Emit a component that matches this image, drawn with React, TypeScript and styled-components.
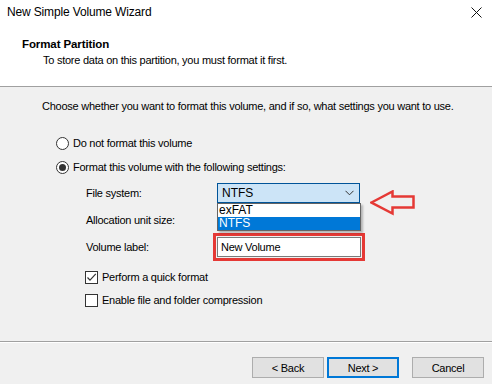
import React from "react";
import styled, { createGlobalStyle } from "styled-components";

const Global = createGlobalStyle`
  html, body { margin: 0; padding: 0; background: #ffffff; }
  * { box-sizing: border-box; }
`;

const Window = styled.div`
  width: 492px;
  height: 384px;
  display: flex;
  flex-direction: column;
  font-family: "Liberation Sans", Arial, sans-serif;
  font-size: 11px;
  letter-spacing: -0.25px;
  color: #000;
  background: #fff;
  overflow: hidden;
`;

const TitleBar = styled.div`
  height: 24px;
  display: flex;
  align-items: center;
  justify-content: space-between;
  padding: 0 6px 0 7px;
  line-height: 16px;
  font-size: 12px;
  letter-spacing: -0.15px;
`;

const CloseBtn = styled.div`
  width: 20px;
  height: 20px;
  display: flex;
  align-items: center;
  justify-content: center;
`;

const Header = styled.div`
  height: 63px;
  padding: 12px 0 0 22px;
  border-bottom: 1px solid #a0a0a0;
`;

const HeaderTitle = styled.div`
  font-weight: bold;
  font-size: 11.5px;
  letter-spacing: -0.1px;
  line-height: 16px;
`;

const HeaderSub = styled.div`
  padding-left: 21px;
  line-height: 16px;
`;

const Body = styled.div`
  height: 254px;
  background: #f0f0f0;
  padding: 11px 0 0 42px;
  display: flex;
  flex-direction: column;
`;

const Line = styled.div`
  line-height: 16px;
  white-space: nowrap;
`;

const Option = styled.div<{ $mt: number; $ml: number }>`
  display: flex;
  align-items: center;
  gap: 4px;
  height: 16px;
  line-height: 16px;
  margin-top: ${(p) => p.$mt}px;
  margin-left: ${(p) => p.$ml}px;
`;

const Radio = styled.span<{ $checked?: boolean }>`
  width: 13px;
  height: 13px;
  border-radius: 50%;
  border: 1px solid #333;
  background: #fff;
  display: flex;
  align-items: center;
  justify-content: center;
  &::after {
    content: "";
    width: 7px;
    height: 7px;
    border-radius: 50%;
    background: ${(p) => (p.$checked ? "#333" : "transparent")};
  }
`;

const Check = styled.span`
  width: 13px;
  height: 13px;
  border: 1px solid #333;
  background: #fff;
  display: flex;
  align-items: center;
  justify-content: center;
`;

const Settings = styled.div`
  display: grid;
  grid-template-columns: 131px 144px;
  grid-template-rows: 20px 20px 20px;
  row-gap: 7px;
  margin: 8px 0 0 44px;
  align-items: center;
`;

const FieldCell = styled.div`
  position: relative;
  height: 20px;
`;

const Combo = styled.div<{ $active?: boolean }>`
  height: 20px;
  width: 143px;
  display: flex;
  align-items: center;
  justify-content: space-between;
  padding: 0 5px 0 4px;
  font-size: 12px;
  letter-spacing: 0;
  background: ${(p) => (p.$active ? "#cce4f7" : "#e5e5e5")};
  border: 1px solid ${(p) => (p.$active ? "#005499" : "#adadad")};
`;

const DropList = styled.div`
  position: absolute;
  top: 20px;
  left: 0;
  width: 144px;
  background: #fff;
  border: 1px solid #646464;
  box-shadow: 2px 2px 2px rgba(0, 0, 0, 0.25);
  z-index: 2;
`;

const DropItem = styled.div<{ $selected?: boolean }>`
  height: 13px;
  line-height: 13px;
  padding-left: 1px;
  font-size: 12px;
  letter-spacing: 0;
  background: ${(p) => (p.$selected ? "#0078d7" : "#fff")};
  color: ${(p) => (p.$selected ? "#fff" : "#000")};
`;

const TextInput = styled.div`
  height: 20px;
  width: 144px;
  background: #fff;
  border: 1px solid #7a7a7a;
  padding-left: 3px;
  line-height: 18px;
  outline: 3px solid #e53935;
  outline-offset: 1px;
`;

const Pointer = styled.svg`
  position: absolute;
  left: 153px;
  top: 7px;
  z-index: 3;
`;

const Footer = styled.div`
  flex: 1;
  border-top: 1px solid #a0a0a0;
  box-shadow: inset 0 1px 0 #ffffff;
  background: #f0f0f0;
  display: flex;
  justify-content: flex-end;
  align-items: flex-start;
  padding: 15px 8px 0 0;
`;

const Button = styled.div<{ $default?: boolean; $mr?: number }>`
  width: 72px;
  height: 21px;
  display: flex;
  align-items: center;
  justify-content: center;
  background: #e1e1e1;
  border: ${(p) => (p.$default ? "2px solid #0078d7" : "1px solid #adadad")};
  margin-right: ${(p) => p.$mr ?? 0}px;
  color: #000;
`;

export default function App() {
  return (
    <>
      <Global />
      <Window>
        <TitleBar>
          <span>New Simple Volume Wizard</span>
          <CloseBtn>
            <svg width="11" height="11" viewBox="0 0 11 11">
              <path d="M0.5 0.5 L10.5 10.5 M10.5 0.5 L0.5 10.5" stroke="#111" strokeWidth="1" />
            </svg>
          </CloseBtn>
        </TitleBar>
        <Header>
          <HeaderTitle>Format Partition</HeaderTitle>
          <HeaderSub>To store data on this partition, you must format it first.</HeaderSub>
        </Header>
        <Body>
          <Line>Choose whether you want to format this volume, and if so, what settings you want to use.</Line>
          <Option $mt={21} $ml={14}>
            <Radio />
            <span>Do not format this volume</span>
          </Option>
          <Option $mt={8} $ml={14}>
            <Radio $checked />
            <span>Format this volume with the following settings:</span>
          </Option>
          <Settings>
            <span>File system:</span>
            <FieldCell>
              <Combo $active>
                <span>NTFS</span>
                <svg width="9" height="6" viewBox="0 0 9 6">
                  <path d="M0.5 0.8 L4.5 4.8 L8.5 0.8" fill="none" stroke="#333" strokeWidth="1" />
                </svg>
              </Combo>
              <DropList>
                <DropItem>exFAT</DropItem>
                <DropItem $selected>NTFS</DropItem>
              </DropList>
              <Pointer width="46" height="26" viewBox="0 0 46 26">
                <path
                  d="M1.5 12.5 L22.5 1.5 L22.5 6.5 L43.5 6.5 L43.5 17.5 L22.5 17.5 L22.5 23.5 Z"
                  fill="none"
                  stroke="#e53935"
                  strokeWidth="2.5"
                  strokeLinejoin="miter"
                />
              </Pointer>
            </FieldCell>
            <span>Allocation unit size:</span>
            <FieldCell />
            <span>Volume label:</span>
            <FieldCell>
              <TextInput>New Volume</TextInput>
            </FieldCell>
          </Settings>
          <Option $mt={12} $ml={43}>
            <Check>
              <svg width="11" height="11" viewBox="0 0 11 11">
                <path d="M1.5 5.5 L4 8.2 L9.8 1.8" fill="none" stroke="#333" strokeWidth="1.2" />
              </svg>
            </Check>
            <span>Perform a quick format</span>
          </Option>
          <Option $mt={7} $ml={43}>
            <Check />
            <span>Enable file and folder compression</span>
          </Option>
        </Body>
        <Footer>
          <Button $mr={3}>&lt; Back</Button>
          <Button $default $mr={13}>Next &gt;</Button>
          <Button>Cancel</Button>
        </Footer>
      </Window>
    </>
  );
}
